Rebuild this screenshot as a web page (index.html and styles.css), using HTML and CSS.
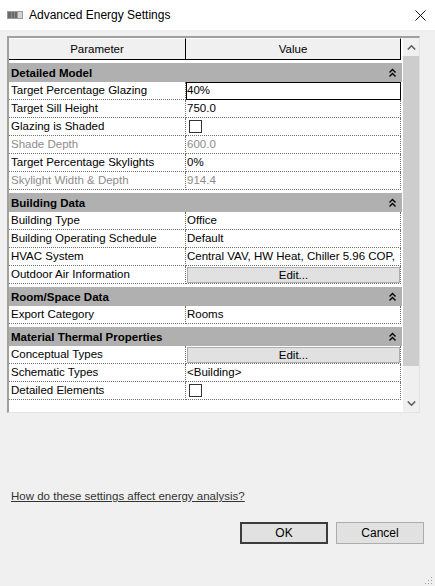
FILE: index.html
```html
<!DOCTYPE html>
<html>
<head>
<meta charset="utf-8">
<title>Advanced Energy Settings</title>
<link rel="stylesheet" href="styles.css">
</head>
<body>
<div class="titlebar">
  <svg class="appicon" viewBox="0 0 16 8"><rect x="0" y="0" width="16" height="8" fill="#9a9a9a"/><rect x="1" y="1" width="9" height="6" fill="#6a6a6a"/><rect x="4" y="1" width="1" height="6" fill="#8a8a8a"/><rect x="7" y="1" width="1" height="6" fill="#8a8a8a"/><rect x="11" y="1" width="4" height="6" fill="#d4d4d4"/></svg>
  <span class="title">Advanced Energy Settings</span>
  <svg class="close" viewBox="0 0 12 12"><path d="M0.5 0.5 L11.5 11.5 M11.5 0.5 L0.5 11.5" stroke="#000" stroke-width="1" fill="none"/></svg>
</div>
<div class="client">
  <div class="grid">
    <div class="table">
      <div class="head"><div class="hc p">Parameter</div><div class="hc v">Value</div></div>

      <div class="section"><span>Detailed Model</span><svg class="chev" viewBox="0 0 7 9"><path d="M0.5 4.5 L3.5 1.5 L6.5 4.5 M0.5 8.5 L3.5 5.5 L6.5 8.5" stroke="#000" stroke-width="1.4" fill="none"/></svg></div>
      <div class="row"><div class="pc">Target Percentage Glazing</div><div class="vc active">40%</div></div>
      <div class="row"><div class="pc">Target Sill Height</div><div class="vc">750.0</div></div>
      <div class="row"><div class="pc">Glazing is Shaded</div><div class="vc"><span class="check"></span></div></div>
      <div class="row dim"><div class="pc">Shade Depth</div><div class="vc">600.0</div></div>
      <div class="row"><div class="pc">Target Percentage Skylights</div><div class="vc">0%</div></div>
      <div class="row dim"><div class="pc">Skylight Width &amp; Depth</div><div class="vc">914.4</div></div>

      <div class="section"><span>Building Data</span><svg class="chev" viewBox="0 0 7 9"><path d="M0.5 4.5 L3.5 1.5 L6.5 4.5 M0.5 8.5 L3.5 5.5 L6.5 8.5" stroke="#000" stroke-width="1.4" fill="none"/></svg></div>
      <div class="row"><div class="pc">Building Type</div><div class="vc">Office</div></div>
      <div class="row"><div class="pc">Building Operating Schedule</div><div class="vc">Default</div></div>
      <div class="row"><div class="pc">HVAC System</div><div class="vc">Central VAV, HW Heat, Chiller 5.96 COP,</div></div>
      <div class="row"><div class="pc">Outdoor Air Information</div><div class="vc"><span class="editbtn">Edit...</span></div></div>

      <div class="section"><span>Room/Space Data</span><svg class="chev" viewBox="0 0 7 9"><path d="M0.5 4.5 L3.5 1.5 L6.5 4.5 M0.5 8.5 L3.5 5.5 L6.5 8.5" stroke="#000" stroke-width="1.4" fill="none"/></svg></div>
      <div class="row"><div class="pc">Export Category</div><div class="vc">Rooms</div></div>

      <div class="section"><span>Material Thermal Properties</span><svg class="chev" viewBox="0 0 7 9"><path d="M0.5 4.5 L3.5 1.5 L6.5 4.5 M0.5 8.5 L3.5 5.5 L6.5 8.5" stroke="#000" stroke-width="1.4" fill="none"/></svg></div>
      <div class="row"><div class="pc">Conceptual Types</div><div class="vc"><span class="editbtn">Edit...</span></div></div>
      <div class="row"><div class="pc">Schematic Types</div><div class="vc">&lt;Building&gt;</div></div>
      <div class="row"><div class="pc">Detailed Elements</div><div class="vc"><span class="check"></span></div></div>
    </div>
    <div class="scrollbar">
      <div class="arrow"><svg viewBox="0 0 9 5"><path d="M0.8 4.5 L4.5 0.8 L8.2 4.5" stroke="#606060" stroke-width="1.6" fill="none"/></svg></div>
      <div class="thumb"></div>
      <div class="track"></div>
      <div class="arrow"><svg viewBox="0 0 9 5"><path d="M0.8 0.5 L4.5 4.2 L8.2 0.5" stroke="#606060" stroke-width="1.6" fill="none"/></svg></div>
    </div>
  </div>
  <a class="help" href="#">How do these settings affect energy analysis?</a>
  <div class="buttons">
    <button class="btn ok">OK</button>
    <button class="btn">Cancel</button>
  </div>
</div>
<svg class="grip" viewBox="0 0 9 9"><rect x="7" y="1" width="1" height="1" fill="#a0a0a0"/><rect x="4" y="4" width="1" height="1" fill="#a0a0a0"/><rect x="7" y="4" width="1" height="1" fill="#a0a0a0"/><rect x="1" y="7" width="1" height="1" fill="#a0a0a0"/><rect x="4" y="7" width="1" height="1" fill="#a0a0a0"/><rect x="7" y="7" width="1" height="1" fill="#a0a0a0"/></svg>
</body>
</html>
```

FILE: styles.css
```css
* { box-sizing: border-box; margin: 0; padding: 0; }
html, body { width: 435px; height: 586px; overflow: hidden; }
body {
  background: #f0f0f0;
  font-family: "Liberation Sans", Arial, sans-serif;
  font-size: 11.5px;
  color: #000;
  position: relative;
}
.titlebar {
  height: 30px;
  background: #fff;
  display: flex;
  align-items: center;
  padding-left: 7px;
}
.appicon { width: 16px; height: 8px; margin-right: 6px; }
.title { flex: 1; font-size: 12px; }
.close { width: 11px; height: 11px; margin-right: 9px; }

.client { padding: 6px 0 0 7px; }
.grid {
  width: 413px;
  height: 377px;
  border-top: 2px solid #a0a0a0;
  border-left: 2px solid #a0a0a0;
  border-right: 1px solid #e3e3e3;
  border-bottom: 1px solid #e3e3e3;
  display: flex;
  background: #fff;
}
.table { width: 394px; height: 374px; background: #fff; }
.head { display: flex; height: 22px; }
.hc {
  display: flex;
  align-items: center;
  justify-content: center;
  background: #f0f0f0;
  border-bottom: 1px solid #000;
  border-right: 1px solid #000;
  border-top: 1px solid #fff;
}
.hc.p { width: 177px; }
.hc.v { width: 215px; }

.section {
  width: 393px;
  height: 19px;
  margin-top: 3px;
  background: #b0b0b0;
  display: flex;
  align-items: center;
  justify-content: space-between;
  padding: 0 6px 0 2px;
  font-weight: bold;
}
.chev { width: 7px; height: 9px; }

.row { display: flex; height: 18px; }
.pc, .vc {
  border-bottom: 1px dotted #707070;
  border-right: 1px dotted #707070;
  line-height: 17px;
  white-space: nowrap;
  overflow: hidden;
  display: flex;
  align-items: center;
}
.pc { width: 177px; padding-left: 2px; }
.vc { width: 215px; padding-left: 1px; }
.row.dim { color: #8c8c8c; }
.vc.active { outline: 1px solid #000; outline-offset: -1px; }
.check {
  width: 13px;
  height: 13px;
  border: 1px solid #333;
  background: #fff;
  margin-left: 2px;
}
.editbtn {
  width: 213px;
  height: 16px;
  background: #e1e1e1;
  border: 1px solid #adadad;
  display: flex;
  align-items: center;
  justify-content: center;
  line-height: 14px;
}

.scrollbar {
  width: 16px;
  background: #f0f0f0;
  display: flex;
  flex-direction: column;
}
.arrow { height: 18px; display: flex; align-items: center; justify-content: center; }
.arrow svg { width: 9px; height: 5px; }
.thumb { height: 310px; background: #cdcdcd; }
.track { flex: 1; }

.help {
  display: block;
  width: max-content;
  margin: 76px 0 0 4px;
  line-height: 14px;
  color: #333;
  text-decoration: underline;
}
.buttons {
  display: flex;
  justify-content: flex-end;
  gap: 8px;
  margin-top: 19px;
  padding-right: 11px;
}
.btn {
  width: 88px;
  height: 22px;
  background: #e1e1e1;
  border: 1px solid #adadad;
  font-family: "Liberation Sans", Arial, sans-serif;
  font-size: 12px;
  color: #000;
}
.btn.ok { border: 2px solid #3c3c3c; }
.grip { position: absolute; right: 2px; bottom: 1px; width: 9px; height: 9px; }
```
